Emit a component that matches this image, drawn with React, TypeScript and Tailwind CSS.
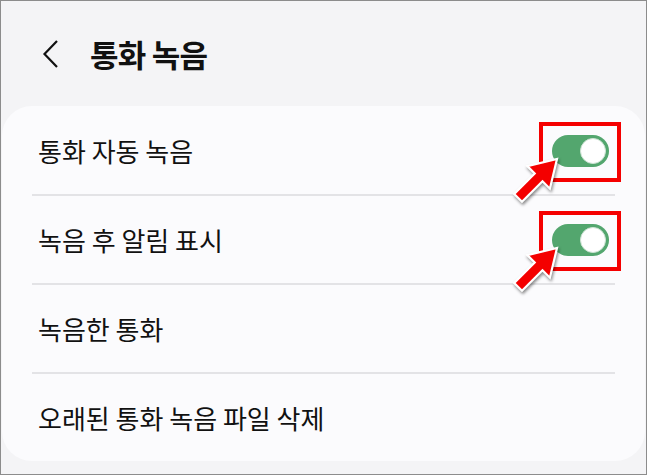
const rows = [
  { label: "통화 자동 녹음", toggle: true },
  { label: "녹음 후 알림 표시", toggle: true },
  { label: "녹음한 통화", toggle: false },
  { label: "오래된 통화 녹음 파일 삭제", toggle: false },
];

const Toggle = () => (
  <div className="relative w-[57px] h-[32px] rounded-full bg-[#53a66e]">
    <div className="absolute right-[3px] top-[3px] w-[26px] h-[26px] rounded-full bg-white border border-[#cfe3d5]" />
  </div>
);

// red callout arrow pointing at the toggle
const Arrow = () => (
  <svg
    className="absolute left-[-45px] top-[15px] overflow-visible"
    width="60"
    height="60"
    viewBox="0 0 60 60"
    style={{ filter: "drop-shadow(1px 2px 1.5px rgba(0,0,0,0.45))" }}
  >
    <polygon
      points="50,9 42.9,38.7 35.5,31.3 15,51.8 7.2,44 27.7,23.5 20.3,16.1"
      fill="#f40000"
      stroke="#ffffff"
      strokeWidth="2.2"
      strokeLinejoin="miter"
    />
  </svg>
);

const App = () => {
  return (
    <div
      className="w-[647px] h-[475px] border border-[#8c8c8c] bg-[#f4f4f6] text-[#111111] overflow-hidden"
      style={{ fontFamily: '"Noto Sans CJK KR", "Noto Sans", sans-serif' }}
    >
      <div className="h-[105px] flex items-center">
        <svg className="ml-[41px] shrink-0" width="16" height="28" viewBox="0 0 16 28">
          <path d="M15 1 L2.5 14 L15 27" fill="none" stroke="#111" strokeWidth="2.2" />
        </svg>
        <h1 className="ml-[32px] text-[31px] font-bold leading-none tracking-[-0.8px]">통화 녹음</h1>
      </div>
      <div className="mx-[1px] bg-[#fbfbfd] rounded-[30px] pt-[1px]">
        {rows.map((row, i) => (
          <div key={i}>
            <div className="relative h-[87px] flex items-center px-[36px]">
              <span className="text-[26px] leading-none">{row.label}</span>
              {row.toggle && (
                <div className="relative ml-auto">
                  <Toggle />
                  <div className="absolute left-[-13px] top-[-13px] w-[82px] h-[60px] border-[4px] border-[#f50000]" />
                  <Arrow />
                </div>
              )}
            </div>
            {i < rows.length - 1 && <div className="mx-[30px] h-[2px] bg-[#e3e3e6]" />}
          </div>
        ))}
      </div>
    </div>
  );
};

export default App;
